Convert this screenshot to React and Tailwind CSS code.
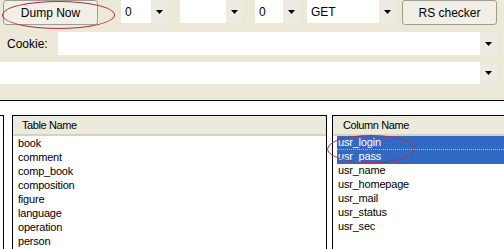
import React from "react";

const Arrow = () => (
    <div className="w-[17px] h-full bg-[#ECEAE1] flex items-center justify-center shrink-0">
        <svg width="7" height="4" viewBox="0 0 7 4"><path d="M0 0h7L3.5 4z" fill="#000" /></svg>
    </div>
);

const Combo = ({ value, className }) => (
    <div className={`flex bg-white h-[23px] ${className}`}>
        <div className="flex-1 flex items-center pl-[4px] text-[12px] text-black">{value}</div>
        <Arrow />
    </div>
);

const XpButton = ({ label, className }) => (
    <button className={`h-[25px] w-[95px] rounded-[3px] border border-[#a09e92] bg-[#F1EFE6] text-[12px] text-black ${className}`}>
        {label}
    </button>
);

const tables = ["book", "comment", "comp_book", "composition", "figure", "language", "operation", "person"];
const columns = ["usr_login", "usr_pass", "usr_name", "usr_homepage", "usr_mail", "usr_status", "usr_sec"];

export default function App() {
    return (
        <div className="relative w-[504px] h-[249px] overflow-hidden bg-white" style={{ fontFamily: '"Liberation Sans", Arial, sans-serif' }}>
            {/* top options area */}
            <div className="bg-[#ECE9D8] h-[101px] border-b border-black flex flex-col">
                <div className="flex items-start h-[29px]">
                    <XpButton label="Dump Now" className="ml-[3px]" />
                    <Combo value="0" className="ml-[23px] w-[47px]" />
                    <Combo value="" className="ml-[12px] w-[63px]" />
                    <Combo value="0" className="ml-[12px] w-[45px]" />
                    <Combo value="GET" className="ml-[7px] w-[89px]" />
                    <XpButton label="RS checker" className="ml-[6px]" />
                </div>
                <div className="flex items-center mt-[3px] h-[23px]">
                    <span className="ml-[7px] w-[51px] text-[12px] text-black">Cookie:</span>
                    <Combo value="" className="w-[439px]" />
                </div>
                <Combo value="" className="mt-[7px] w-[497px] !h-[22px]" />
            </div>

            {/* result lists */}
            <div className="flex pt-[14px] h-[148px] text-[11px] tracking-[-0.2px] text-black">
                <div className="w-[4px] border-t border-r border-black shrink-0" />
                <div className="ml-[8px] w-[315px] border-t border-l border-r border-black shrink-0 flex flex-col">
                    <div className="h-[20px] bg-[#EBEADB] border-b-2 border-[#D6D2C2] flex items-center pl-[9px] text-[11px] tracking-[-0.4px]">Table Name</div>
                    {tables.map((t) => (
                        <div key={t} className="h-[14px] leading-[14px] pl-[5px]">{t}</div>
                    ))}
                </div>
                <div className="ml-[5px] w-[180px] border-t border-l border-black shrink-0 flex flex-col">
                    <div className="h-[20px] bg-[#EBEADB] border-b-2 border-[#D6D2C2] flex items-center pl-[10px] text-[11px] tracking-[-0.4px]">Column Name</div>
                    {columns.map((c, i) => (
                        <div key={c} className="pl-[4px]">
                            <div className={`h-[14px] leading-[13px] pl-[1px] ${i < 2 ? "bg-[#316AC5] text-white" : ""} ${i === 0 ? "border-b border-dotted border-[#a8c0ea]" : ""}`}>{c}</div>
                        </div>
                    ))}
                </div>
            </div>

            {/* red marker ellipses */}
            <div className="absolute left-[2px] top-[1px] w-[113px] h-[28px] rounded-[50%] border border-[#B0304A]" />
            <div className="absolute left-[327px] top-[135px] w-[88px] h-[28px] rounded-[50%] border border-[#B0304A]" />
        </div>
    );
}
